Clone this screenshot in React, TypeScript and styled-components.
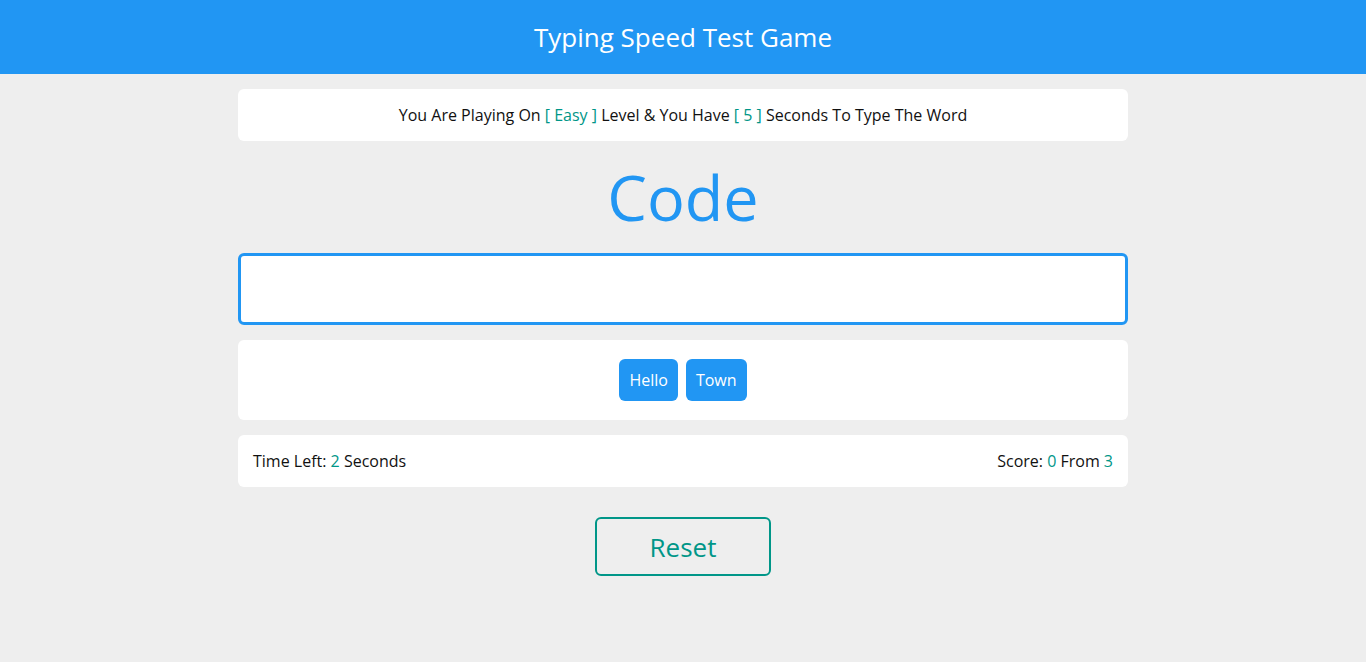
import React from "react";
import styled, { createGlobalStyle } from "styled-components";

const Global = createGlobalStyle`
  * { box-sizing: border-box; }
  body {
    margin: 0;
    background: #eeeeee;
    font-family: "Open Sans", "Liberation Sans", sans-serif;
    color: #111;
  }
`;

const Header = styled.header`
  height: 74px;
  background: #2196f3;
  color: #fff;
  display: flex;
  align-items: center;
  justify-content: center;
`;

const Title = styled.h1`
  margin: 0;
  font-size: 26px;
  font-weight: 400;
`;

const Container = styled.main`
  width: 890px;
  margin: 0 auto;
  padding-top: 15px;
  display: flex;
  flex-direction: column;
`;

const Panel = styled.div<{ $center?: boolean }>`
  background: #fff;
  border-radius: 6px;
  padding: 15px;
  font-size: 16px;
  line-height: 22px;
  display: flex;
  justify-content: ${(p) => (p.$center ? "center" : "space-between")};
  align-items: center;
`;

const Hl = styled.span`
  color: #009688;
`;

const Word = styled.div`
  color: #2196f3;
  font-size: 63px;
  line-height: 112px;
  height: 112px;
  text-align: center;
`;

const Input = styled.input`
  height: 72px;
  width: 100%;
  border: 3px solid #2196f3;
  border-radius: 6px;
  background: #fff;
  outline: none;
  font-family: inherit;
  font-size: 24px;
  padding: 0 15px;
`;

const Words = styled.div`
  margin-top: 15px;
  background: #fff;
  border-radius: 6px;
  height: 80px;
  display: flex;
  justify-content: center;
  align-items: center;
  gap: 8px;
`;

const Chip = styled.span`
  background: #2196f3;
  color: #fff;
  border-radius: 6px;
  padding: 10px;
  font-size: 16px;
  line-height: 22px;
`;

const Gap = styled.div<{ $h: number }>`
  height: ${(p) => p.$h}px;
`;

const ResetButton = styled.button`
  align-self: center;
  width: 176px;
  height: 59px;
  background: transparent;
  border: 2px solid #009688;
  border-radius: 6px;
  color: #009688;
  font-family: inherit;
  font-size: 26px;
  cursor: pointer;
`;

export default function App() {
  return (
    <>
      <Global />
      <Header>
        <Title>Typing Speed Test Game</Title>
      </Header>
      <Container>
        <Panel $center>
          <span>
            You Are Playing On <Hl>[ Easy ]</Hl> Level &amp; You Have <Hl>[ 5 ]</Hl> Seconds To Type The Word
          </span>
        </Panel>
        <Word>Code</Word>
        <Input />
        <Words>
          <Chip>Hello</Chip>
          <Chip>Town</Chip>
        </Words>
        <Gap $h={15} />
        <Panel>
          <span>
            Time Left: <Hl>2</Hl> Seconds
          </span>
          <span>
            Score: <Hl>0</Hl> From <Hl>3</Hl>
          </span>
        </Panel>
        <Gap $h={30} />
        <ResetButton>Reset</ResetButton>
      </Container>
    </>
  );
}
